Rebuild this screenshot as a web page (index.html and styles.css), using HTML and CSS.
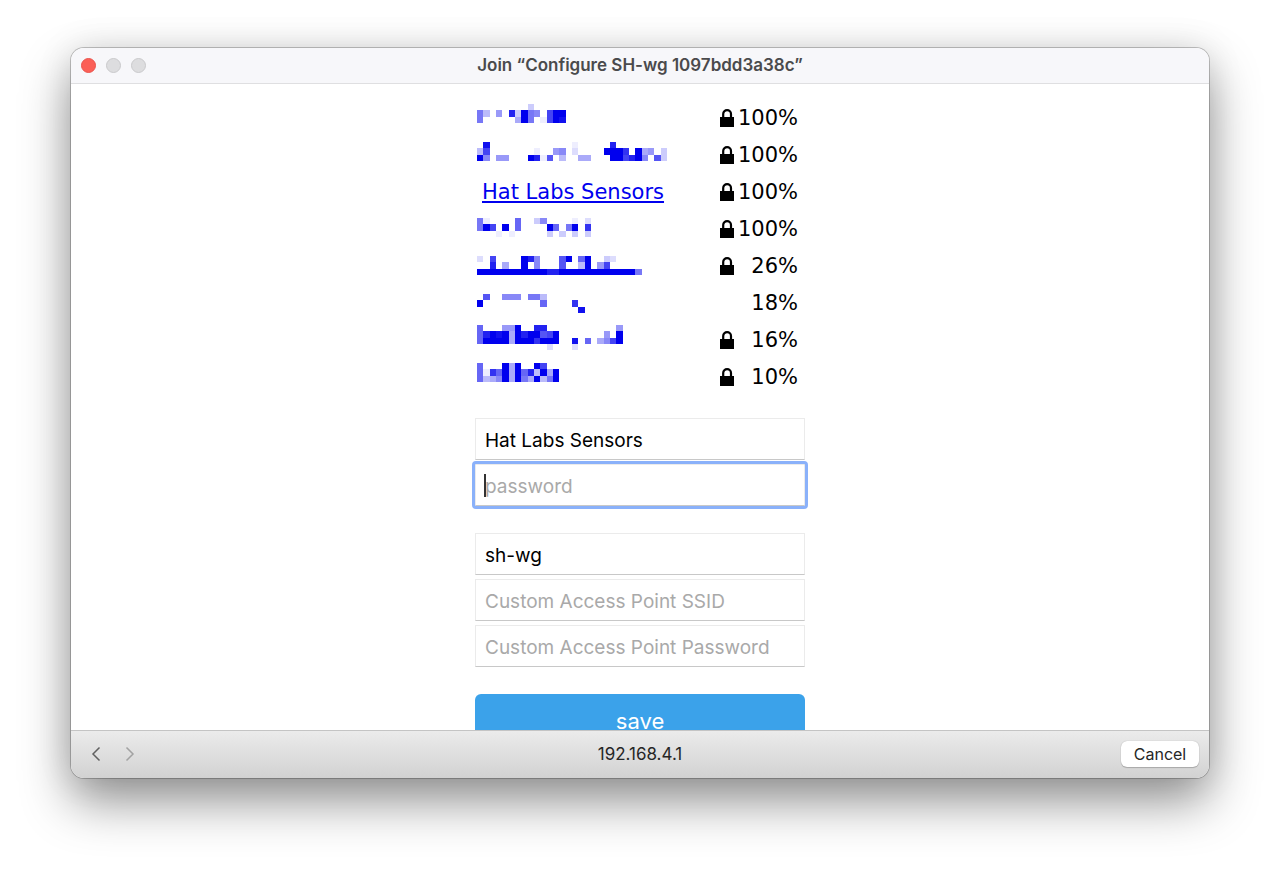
FILE: index.html
```html
<!DOCTYPE html>
<html lang="en">
<head>
<meta charset="utf-8">
<title>Join “Configure SH-wg 1097bdd3a38c”</title>
<link rel="stylesheet" href="styles.css">
</head>
<body>
<svg width="0" height="0" class="defs" aria-hidden="true">
  <symbol id="lock" viewBox="0 0 14 20">
    <path d="M3.200 9V5a3.900 3.900 0 0 1 7.800 0v4" fill="none" stroke="#000" stroke-width="2.200"/>
    <path d="M0 8h14v10H0z"/>
  </symbol>
</svg>
<div class="window">
  <header class="titlebar">
    <div class="lights">
      <button class="light light-close" aria-label="Close"></button>
      <button class="light" aria-label="Minimize" disabled></button>
      <button class="light" aria-label="Zoom" disabled></button>
    </div>
    <h1 class="title">Join “Configure SH-wg 1097bdd3a38c”</h1>
  </header>

  <main class="content">
    <div class="portal">
      <ul class="networks">
        <li class="network"><a href="#" aria-label="Hidden network 1"><svg class="mosaic" data-top="4" data-rows="000000003 84060d3f870bff 8000005f801bfe"></svg></a><svg class="lock"><use href="#lock"/></svg><span class="signal">100%</span></li>
        <li class="network"><a href="#" aria-label="Hidden network 2"><svg class="mosaic" data-top="5" data-rows="0e0000000000000100000d 4b000000010067020000fffc0f5603 f7066000fd1a040055000ffbdf70a3"></svg></a><svg class="lock"><use href="#lock"/></svg><span class="signal">100%</span></li>
        <li class="network"><a class="ssid" href="#">Hat Labs Sensors</a><svg class="lock"><use href="#lock"/></svg><span class="signal">100%</span></li>
        <li class="network"><a href="#" aria-label="Hidden network 3"><svg class="mosaic" data-top="7" data-rows="810000900370000102 8fb0f090000f908f0c 000101000003030303"></svg></a><svg class="lock"><use href="#lock"/></svg><span class="signal">100%</span></li>
        <li class="network"><a href="#" aria-label="Hidden network 4"><svg class="mosaic" data-top="8" data-rows="20b0000fd7000af09f0032 00d0500f07000a004f06b fffffffffffddffffffffffff8"></svg></a><svg class="lock"><use href="#lock"/></svg><span class="signal">26%</span></li>
        <li class="network"><a href="#" aria-label="Hidden network 5"><svg class="mosaic" data-top="9" data-rows="0a007770884 f00000000090000c 0000000000000000e"></svg></a><span class="signal">18%</span></li>
        <li class="network"><a href="#" aria-label="Hidden network 6"><svg class="mosaic" data-top="3" data-rows="900066f00dd000000000006 9dfef5fdffabf000000060f 9ffff5fffcfff00e09057bf 0000000000020002"></svg></a><svg class="lock"><use href="#lock"/></svg><span class="signal">16%</span></li>
        <li class="network"><a href="#" aria-label="Hidden network 7"><svg class="mosaic" data-top="4" data-rows="9000f5f00fb 91c9f5f9d4f5f 9457f5f85f48f"></svg></a><svg class="lock"><use href="#lock"/></svg><span class="signal">10%</span></li>
      </ul>

      <form class="form">
        <div class="group">
          <input class="field" type="text" aria-label="SSID" value="Hat Labs Sensors">
          <div class="active">
            <input class="field field-active" type="password" aria-label="password" placeholder="password">
            <span class="caret"></span>
          </div>
        </div>
        <div class="group">
          <input class="field" type="text" aria-label="Hostname" value="sh-wg">
          <input class="field" type="text" aria-label="Custom Access Point SSID" placeholder="Custom Access Point SSID">
          <input class="field" type="password" aria-label="Custom Access Point Password" placeholder="Custom Access Point Password">
        </div>
        <button class="save" type="button">save</button>
      </form>
    </div>
  </main>

  <footer class="toolbar">
    <div class="nav">
      <button class="arrow" aria-label="Back"><svg width="10" height="16" viewBox="0 0 10 16"><path d="M8.500 1.500L2 8l6.500 6.500"/></svg></button>
      <button class="arrow arrow-off" aria-label="Forward" disabled><svg width="10" height="16" viewBox="0 0 10 16"><path d="M1.500 1.500L8 8l-6.500 6.500"/></svg></button>
    </div>
    <span class="address">192.168.4.1</span>
    <button class="cancel">Cancel</button>
  </footer>
</div>
<script src="mosaic.js"></script>
</body>
</html>
```
FILE: styles.css
```css
* { box-sizing: border-box; }

body {
  margin: 0;
  height: 100vh;
  display: flex;
  padding: 48px 71px 94px;
  background: #fff;
  font-family: Inter, "Liberation Sans", sans-serif;
  overflow: hidden;
}

button { font: inherit; border: 0; padding: 0; background: none; }

.defs { position: absolute; }

.window {
  flex: 1;
  display: flex;
  flex-direction: column;
  min-height: 0;
  border-radius: 13px;
  overflow: hidden;
  background: #fff;
  box-shadow: 0 0 0 1px rgba(0, 0, 0, 0.22), 0 24px 50px rgba(0, 0, 0, 0.42), 0 0 36px rgba(0, 0, 0, 0.1);
}

.titlebar {
  display: grid;
  grid-template-columns: 1fr auto 1fr;
  align-items: center;
  height: 36px;
  flex: none;
  padding: 0 10px;
  background: #f7f7fa;
  border-bottom: 1px solid #dfdfe1;
}

.lights { display: flex; gap: 10px; }

.light {
  width: 15px;
  height: 15px;
  border-radius: 50%;
  background: #dddddf;
  border: 1px solid #c9c9cb;
}

.light-close { background: #fb5f57; border-color: #e9534c; }

.title {
  margin: 0;
  font-size: 17px;
  line-height: 20px;
  padding-bottom: 2px;
  font-weight: 600;
  color: #4a4a4c;
}

.content {
  flex: 1;
  min-height: 0;
  overflow: hidden;
  padding-top: 16px;
}

.portal { width: 330px; margin: 0 auto; }

.networks {
  list-style: none;
  margin: 0;
  padding: 0 7px 0 2px;
  font-family: "DejaVu Sans", sans-serif;
  font-size: 21px;
}

.network {
  display: grid;
  grid-template-columns: 1fr 14px 64px;
  align-items: center;
  height: 37px;
  line-height: 37px;
}

.ssid { color: #0000ee; padding-left: 5px; }

.mosaic { display: block; width: 190px; height: 37px; fill: #0000ee; }

.lock { width: 14px; height: 20px; }

.signal { grid-column: 3; text-align: right; }

.form {
  display: flex;
  flex-direction: column;
  gap: 27px;
  padding-top: 22px;
}

.group { display: flex; flex-direction: column; gap: 4px; }

.field {
  display: block;
  width: 100%;
  height: 42px;
  padding: 2px 9px 0;
  border: 1px solid #ebebeb;
  border-bottom-color: #c8c8c8;
  background: #fff;
  color: #000;
  font-family: inherit;
  font-size: 19px;
}

.field::placeholder { color: #a9a9a9; opacity: 1; }

.active { position: relative; }

.field-active { outline: 3px solid #8ab1fa; border-radius: 1px; }

.caret {
  position: absolute;
  left: 9px;
  top: 10px;
  width: 2px;
  height: 23px;
  background: #333;
}

.save {
  height: 54px;
  border-radius: 6px;
  background: #3ba2ea;
  color: #fff;
  font-size: 22px;
}

.toolbar {
  display: grid;
  grid-template-columns: 1fr auto 1fr;
  align-items: center;
  height: 48px;
  flex: none;
  padding: 0 10px 1px;
  background: linear-gradient(#ebebeb, #d2d2d2);
  border-top: 1px solid #c4c4c4;
}

.nav { display: flex; gap: 16px; padding-left: 6px; }

.arrow { display: flex; justify-content: center; width: 18px; }

.arrow path { fill: none; stroke: #606060; stroke-width: 1.5; }

.arrow-off path { stroke: #a2a2a2; }

.address { font-size: 17px; color: #262626; }

.cancel {
  justify-self: end;
  width: 78px;
  height: 26px;
  border-radius: 6px;
  background: #fff;
  box-shadow: 0 0 1px rgba(0, 0, 0, 0.3), 0 1px 1px rgba(0, 0, 0, 0.2);
  color: #262626;
  font-size: 16px;
}
```
FILE: mosaic.js
```js
// Each row is a string of hex digits; a digit is the strength of one cell.
const CELL = 19 / 3;
document.querySelectorAll(".mosaic").forEach((svg) => {
  const top = Number(svg.dataset.top);
  svg.dataset.rows.split(" ").forEach((row, r) => {
    [...row].forEach((digit, c) => {
      const level = parseInt(digit, 16);
      if (!level) return;
      const rect = document.createElementNS("http://www.w3.org/2000/svg", "rect");
      const x = Math.round(c * CELL);
      const y = Math.round(r * CELL);
      rect.setAttribute("x", x);
      rect.setAttribute("y", top + y);
      rect.setAttribute("width", Math.round((c + 1) * CELL) - x);
      rect.setAttribute("height", Math.round((r + 1) * CELL) - y);
      rect.setAttribute("fill-opacity", level / 15);
      svg.appendChild(rect);
    });
  });
});
```
